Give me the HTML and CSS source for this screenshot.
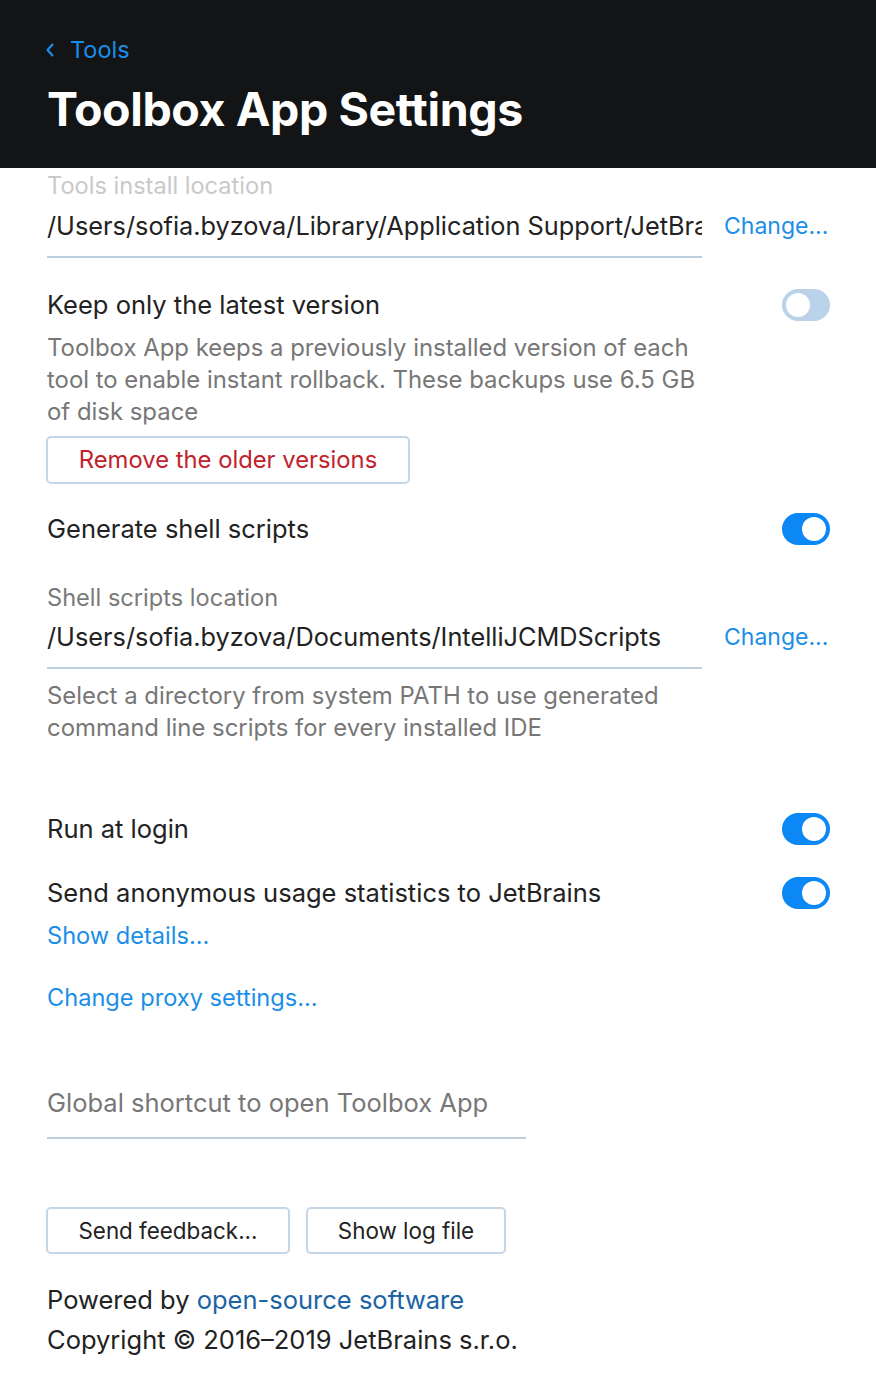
FILE: index.html
```html
<!DOCTYPE html>
<html>
<head>
<meta charset="utf-8">
<link rel="stylesheet" href="styles.css">
</head>
<body>
<div class="window">
  <header class="header">
    <a class="back"><svg class="chev" width="10" height="16" viewBox="0 0 10 16"><path d="M7.5 2.5 L2.5 8 L7.5 13.5" fill="none" stroke="#1a8ee8" stroke-width="2.2" stroke-linecap="round" stroke-linejoin="round"/></svg><span>Tools</span></a>
    <h1 class="title">Toolbox App Settings</h1>
  </header>
  <main class="content">
    <div class="field first">
      <div class="field-main">
        <div class="label faded">Tools install location</div>
        <div class="path">/Users/sofia.byzova/Library/Application Support/JetBrains</div>
      </div>
      <a class="change">Change...</a>
    </div>

    <div class="row r-keep">
      <span class="text">Keep only the latest version</span>
      <span class="toggle off"><span class="knob"></span></span>
    </div>
    <p class="desc w650">Toolbox App keeps a previously installed version of each tool to enable instant rollback. These backups use 6.5 GB of disk space</p>
    <button class="btn btn-danger">Remove the older versions</button>

    <div class="row r-gen">
      <span class="text">Generate shell scripts</span>
      <span class="toggle on"><span class="knob"></span></span>
    </div>

    <div class="field second">
      <div class="field-main">
        <div class="label">Shell scripts location</div>
        <div class="path">/Users/sofia.byzova/Documents/IntelliJCMDScripts</div>
      </div>
      <a class="change">Change...</a>
    </div>
    <p class="desc d-shell">Select a directory from system PATH to use generated command line scripts for every installed IDE</p>

    <div class="row r-login">
      <span class="text">Run at login</span>
      <span class="toggle on"><span class="knob"></span></span>
    </div>
    <div class="row r-stats">
      <span class="text">Send anonymous usage statistics to JetBrains</span>
      <span class="toggle on"><span class="knob"></span></span>
    </div>
    <a class="link l-details">Show details...</a>
    <a class="link l-proxy">Change proxy settings...</a>

    <div class="shortcut">Global shortcut to open Toolbox App</div>

    <div class="btn-row">
      <button class="btn btn-feedback">Send feedback...</button>
      <button class="btn btn-log">Show log file</button>
    </div>

    <p class="foot f-powered">Powered by <a class="oss">open-source software</a></p>
    <p class="foot">Copyright © 2016–2019 JetBrains s.r.o.</p>
  </main>
</div>
</body>
</html>
```

FILE: styles.css
```css
* { box-sizing: border-box; }
html, body { margin: 0; padding: 0; }
body {
  background: #ffffff;
  font-family: Inter, "Noto Sans", "Liberation Sans", sans-serif;
  font-size: 25.5px;
  line-height: 32px;
  color: #222222;
  width: 876px;
  height: 1398px;
  overflow: hidden;
}
.window { width: 876px; height: 1398px; background: #fff; }

.header {
  background: #131416;
  height: 168px;
  padding: 34px 47px 0 47px;
}
.back {
  display: flex;
  align-items: center;
  height: 32px;
  color: #1a8ee8;
  font-size: 23.5px;
}
.chev { margin-right: 15px; margin-left: -2px; }
.title {
  margin: 15px 0 0 0;
  color: #ffffff;
  font-size: 46.5px;
  line-height: 56px;
  font-weight: 700;
  letter-spacing: -0.4px;
}

.content { padding: 2px 46px 0 47px; }

.field { display: flex; align-items: flex-end; }
.field-main {
  width: 655px;
  border-bottom: 2px solid #bcd0e0;
  padding-bottom: 14px;
}
.label { color: #7a7a7a; height: 32px; font-size: 23.6px; }
.label.faded { color: #c9c9c9; }
.path {
  margin-top: 8px;
  white-space: nowrap;
  overflow: hidden;
  height: 32px;
  font-size: 25.3px;
}
.second .path { margin-top: 7px; }
.change {
  color: #1a8ee8;
  margin-left: 22px;
  margin-bottom: 16px;
  line-height: 32px;
  font-size: 23px;
}

.row {
  display: flex;
  justify-content: space-between;
  align-items: center;
  height: 32px;
}
.r-keep { margin-top: 31px; }
.r-gen { margin-top: 29px; }
.r-login { margin-top: 69px; }
.r-stats { margin-top: 32px; }
.second { margin-top: 37px; }

.toggle {
  width: 48px;
  height: 32px;
  border-radius: 16px;
  position: relative;
  flex: none;
}
.toggle.on { background: #0b87f6; }
.toggle.off { background: #bad2ea; }
.knob {
  position: absolute;
  top: 4px;
  width: 24px;
  height: 24px;
  border-radius: 50%;
  background: #ffffff;
}
.toggle.on .knob { left: 20px; }
.toggle.off .knob { left: 4px; }

.desc {
  margin: 11px 0 0 0;
  color: #777777;
  font-size: 23.9px;
}
.w650 { width: 660px; }
.d-shell { width: 640px; }

.btn {
  font-family: inherit;
  font-size: 22.4px;
  line-height: 28px;
  background: #ffffff;
  border: 2px solid #c5d6e6;
  border-radius: 5px;
  color: #222;
  display: block;
  height: 48px;
  padding: 0;
}
.btn-danger {
  margin-top: 8px;
  width: 364px;
  color: #c1232c;
  margin-left: -1px;
  font-size: 23.8px;
}
.btn-row { display: flex; gap: 16px; margin-top: 68px; margin-left: -1px; }
.btn-feedback { width: 244px; height: 47px; }
.btn-log { width: 200px; height: 47px; }

.link {
  display: block;
  color: #1a8ee8;
  height: 32px;
  font-size: 23.6px;
}
.l-details { margin-top: 11px; }
.l-proxy { margin-top: 30px; }

.shortcut {
  margin-top: 73px;
  width: 479px;
  color: #777777;
  border-bottom: 2px solid #bcd0e0;
  padding-bottom: 18px;
  height: 52px;
}

.foot { margin: 0; height: 40px; line-height: 32px; }
.f-powered { margin-top: 30px; }
.oss { color: #1c63a3; }
```
